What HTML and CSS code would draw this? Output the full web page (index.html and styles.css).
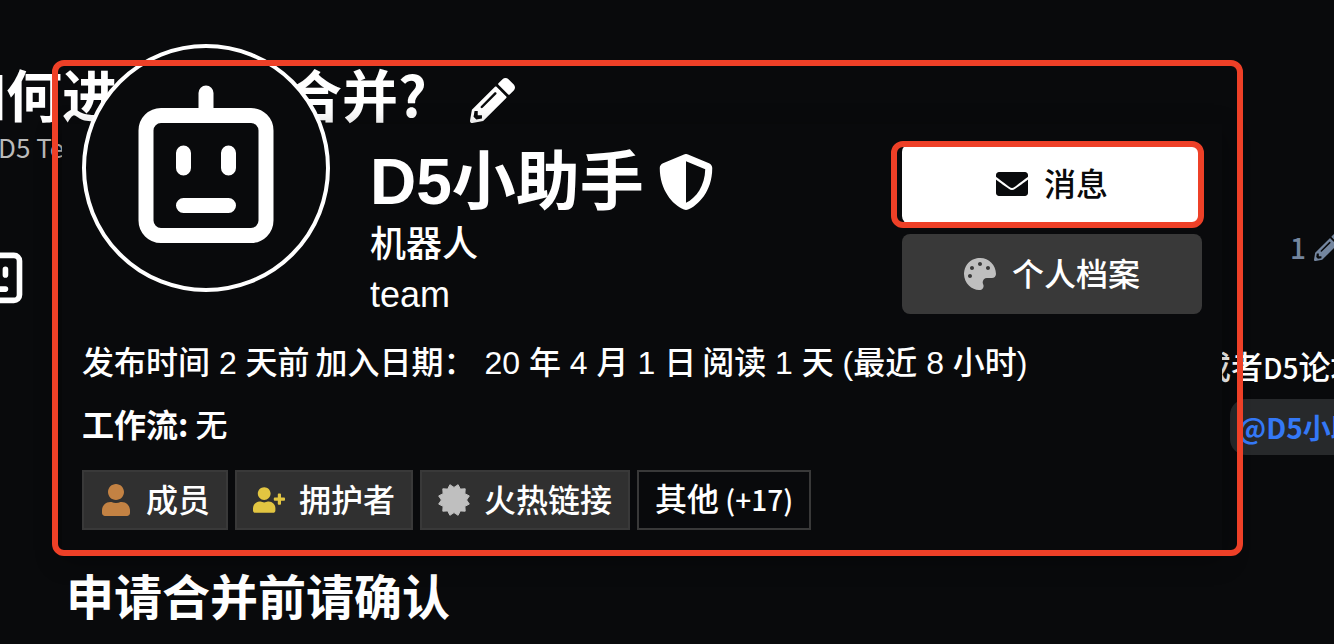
FILE: index.html
```html
<!DOCTYPE html>
<html lang="zh-CN">
<head>
<meta charset="utf-8">
<title>D5小助手</title>
<link rel="stylesheet" href="styles.css">
</head>
<body>
<svg class="sprite" aria-hidden="true">
  <symbol id="bot" viewBox="0 0 240 240">
    <g fill="none" stroke="currentColor" stroke-width="15" stroke-linecap="round">
      <rect x="60" y="67.5" width="120" height="120" rx="15"/>
      <path d="M120 45v20M97.500 105v15M142.500 105v15M97.500 157.500h45"/>
    </g>
  </symbol>
  <symbol id="pencil" viewBox="0 0 512 512"><path d="M497.9 142.1l-46.1 46.1c-4.7 4.7-12.3 4.7-17 0l-111-111c-4.7-4.7-4.7-12.3 0-17l46.1-46.1c18.700-18.700 49.100-18.700 67.900 0l60.100 60.100c18.800 18.700 18.800 49.100 0 67.900zM284.200 99.800L21.600 362.400.4 483.900c-2.900 16.400 11.400 30.600 27.800 27.800l121.500-21.300 262.600-262.600c4.700-4.700 4.700-12.300 0-17l-111-111c-4.800-4.700-12.400-4.700-17.100 0zM124.100 339.900c-5.500-5.500-5.500-14.300 0-19.800l154-154c5.500-5.500 14.300-5.500 19.800 0s5.500 14.300 0 19.800l-154 154c-5.500 5.500-14.300 5.500-19.800 0zM88 424h48v36.300l-64.500 11.300-31.100-31.100L51.700 376H88v48z"/></symbol>
</svg>

<main class="topic">
  <h1 class="topic-title">如何进行账号合并?
    <button class="edit" type="button" aria-label="编辑"><svg class="icon"><use href="#pencil"/></svg></button>
  </h1>
  <div class="category">D5 Team</div>
  <article class="post">
    <svg class="post-avatar"><use href="#bot"/></svg>
    <div class="post-body">
      <div class="post-side">
        <div class="edits">1 <svg class="icon"><use href="#pencil"/></svg></div>
        <p class="post-text">或者<span class="latin">D5</span>论坛</p>
        <a class="mention" href="#">@D5小助手</a>
      </div>
      <h2 class="post-heading">申请合并前请确认</h2>
    </div>
  </article>
</main>

<section class="card">
  <header class="card-head">
    <a class="avatar" href="#" aria-label="D5小助手"><svg><use href="#bot"/></svg></a>
    <div class="names">
      <h2 class="name">D5小助手
        <svg class="shield" viewBox="0 0 512 512"><path d="M466.500 83.700l-192-80a48.150 48.150 0 0 0-36.900 0l-192 80C27.700 91.100 16 108.600 16 128c0 198.500 114.500 335.700 221.500 380.300 11.800 4.900 25.100 4.900 36.900 0C360.100 472.600 496 349.300 496 128c0-19.400-11.700-36.900-29.500-44.300zM256.100 446.300l-.1-381 175.900 73.300c-3.300 151.400-82.100 261.100-175.800 307.700z"/></svg>
      </h2>
      <div class="subname">机器人</div>
      <div class="subname">team</div>
    </div>
    <div class="controls">
      <div class="highlight">
        <button class="btn primary" type="button">
          <svg class="icon" viewBox="0 0 512 512"><path d="M502.300 190.800c3.900-3.100 9.700-.2 9.700 4.700V400c0 26.500-21.500 48-48 48H48c-26.500 0-48-21.500-48-48V195.600c0-5 5.700-7.800 9.700-4.700 22.400 17.400 52.100 39.500 154.100 113.600 21.100 15.400 56.700 47.800 92.200 47.600 35.700.3 72-32.800 92.300-47.600 102-74.100 131.600-96.300 154-113.700zM256 320c23.200.4 56.600-29.200 73.400-41.400 132.700-96.300 142.800-104.700 173.400-128.700 5.800-4.500 9.200-11.500 9.200-18.900v-19c0-26.500-21.500-48-48-48H48c-26.500 0-48 21.500-48 48v19c0 7.400 3.400 14.300 9.200 18.900 30.600 23.900 40.700 32.400 173.400 128.700 16.800 12.200 50.200 41.800 73.400 41.400z"/></svg>
          <span class="label">消息</span>
        </button>
      </div>
      <button class="btn" type="button">
        <svg class="icon muted" viewBox="0 0 512 512"><path d="M204.300 5C104.900 24.400 24.800 104.300 5.200 203.400c-37 187 131.700 326.400 258.800 306.700 41.200-6.400 61.400-54.600 42.500-91.700-23.100-45.400 9.900-98.400 60.900-98.400h79.700c35.800 0 64.800-29.600 64.900-65.300C511.500 97.100 368.100-26.900 204.300 5zM96 320c-17.700 0-32-14.300-32-32s14.300-32 32-32 32 14.300 32 32-14.300 32-32 32zm32-128c-17.700 0-32-14.300-32-32s14.300-32 32-32 32 14.300 32 32-14.300 32-32 32zm128-64c-17.700 0-32-14.300-32-32s14.300-32 32-32 32 14.300 32 32-14.300 32-32 32zm128 64c-17.700 0-32-14.300-32-32s14.300-32 32-32 32 14.300 32 32-14.300 32-32 32z"/></svg>
        <span class="label">个人档案</span>
      </button>
    </div>
  </header>
  <div class="meta">
    <span>发布时间 2 天前</span>
    <span>加入日期： 20 年 4 月 1 日</span>
    <span>阅读 1 天 (最近 8 小时)</span>
  </div>
  <div class="field"><strong>工作流:</strong> 无</div>
  <div class="badges">
    <a class="badge" href="#"><svg class="icon bronze" viewBox="-32 0 512 512"><path d="M224 256c70.700 0 128-57.300 128-128S294.700 0 224 0 96 57.300 96 128s57.300 128 128 128zm89.600 32h-16.700c-22.200 10.200-46.900 16-72.900 16s-50.600-5.800-72.900-16h-16.700C60.200 288 0 348.200 0 422.400V464c0 26.500 21.500 48 48 48h352c26.500 0 48-21.500 48-48v-41.600c0-74.200-60.200-134.400-134.400-134.400z"/></svg><span class="label">成员</span></a>
    <a class="badge" href="#"><svg class="icon gold" viewBox="0 0 640 512"><path d="M624 208h-64v-64c0-8.800-7.200-16-16-16h-32c-8.800 0-16 7.200-16 16v64h-64c-8.800 0-16 7.200-16 16v32c0 8.800 7.200 16 16 16h64v64c0 8.800 7.200 16 16 16h32c8.800 0 16-7.200 16-16v-64h64c8.800 0 16-7.200 16-16v-32c0-8.800-7.200-16-16-16zM224 256c70.700 0 128-57.300 128-128S294.700 0 224 0 96 57.300 96 128s57.300 128 128 128zm89.600 32h-16.700c-22.200 10.200-46.900 16-72.900 16s-50.600-5.800-72.900-16h-16.700C60.200 288 0 348.200 0 422.400V464c0 26.500 21.500 48 48 48h352c26.500 0 48-21.500 48-48v-41.600c0-74.200-60.200-134.400-134.400-134.400z"/></svg><span class="label">拥护者</span></a>
    <a class="badge" href="#"><svg class="icon muted" viewBox="-16 -16 32 32"><path stroke="currentColor" stroke-linejoin="round" d="M12.600 0L15.300 4.100 10.900 6.300 11.200 11.200 6.300 10.900 4.100 15.300 0 12.600-4.100 15.300-6.300 10.900-11.200 11.200-10.900 6.300-15.300 4.100-12.600 0-15.300-4.100-10.900-6.300-11.200-11.200-6.300-10.900-4.100-15.300 0-12.600 4.100-15.300 6.300-10.900 11.200-11.200 10.900-6.300 15.300-4.100z"/></svg><span class="label">火热链接</span></a>
    <a class="badge more" href="#"><span class="label">其他<span class="latin"> (+17)</span></span></a>
  </div>
</section>
</body>
</html>
```
FILE: styles.css
```css
* { box-sizing: border-box; }

body {
  margin: 0;
  min-height: 100vh;
  position: relative;
  overflow: hidden;
  background: #090a0c;
  color: #fff;
  font-family: "Noto Sans CJK SC", sans-serif;
  font-size: 32px;
  font-weight: 500;
}

h1, h2, p { margin: 0; }
a { color: inherit; text-decoration: none; }
button { font: inherit; color: inherit; border: 0; padding: 0; background: none; }
svg { display: block; fill: currentColor; flex: none; }
.sprite { position: absolute; width: 0; height: 0; }
.icon { width: 32px; height: 32px; }
.latin { font-size: 28px; }
.label { padding-bottom: 4px; }

/* Topic page */
.topic { margin: 0 -28px 0 -50px; padding-top: 56px; }

.topic-title {
  display: flex;
  align-items: flex-start;
  gap: 43px;
  font-size: 56px;
  line-height: 74px;
}
.edit { padding-top: 22px; }
.edit .icon { width: 45px; height: 45px; }
.category { padding-left: 48px; font-size: 26px; font-weight: 400; line-height: 34px; color: #bbb; }

.post { display: flex; gap: 24px; margin-top: 66px; padding-left: 2px; }
.post-avatar { width: 90px; height: 90px; }
.post-body { flex: 1; }
.post-side { display: flex; flex-direction: column; width: 163px; margin-left: auto; }
.edits {
  display: flex;
  align-items: center;
  gap: 8px;
  padding-left: 91px;
  margin-bottom: 77px;
  font-size: 28px;
  line-height: 34px;
  color: #74869f;
}
.edits .icon { width: 28px; height: 28px; }
.post-text { line-height: 48px; white-space: nowrap; }
.mention {
  margin: 8px 0 0 31px;
  padding: 0 8px;
  border-radius: 16px;
  background: #27292b;
  color: #3478f6;
  font-size: 28px;
  font-weight: 700;
  line-height: 56px;
  white-space: nowrap;
}
.post-heading { margin-top: 103px; font-size: 48px; line-height: 72px; }

/* User card, floating over the topic */
.card {
  position: absolute;
  top: 124px;
  left: 62px;
  right: 112px;
  padding: 20px;
  background: #090a0c;
  box-shadow: 0 8px 24px rgba(0, 0, 0, 0.4);
}
.card::after {
  content: "";
  position: absolute;
  inset: -64px -21px -6px -10px;
  border: 6px solid #ee4027;
  border-radius: 12px;
  pointer-events: none;
}
.card-head { display: flex; align-items: flex-start; gap: 40px; }
.avatar {
  flex: none;
  margin-top: -100px;
  border: 4px solid #fff;
  border-radius: 50%;
  background: #090a0c;
}
.avatar svg { width: 240px; height: 240px; }
.names { flex: 1; font-family: "Liberation Sans", "Noto Sans CJK SC", sans-serif; }
.name { display: flex; align-items: center; gap: 14px; font-size: 64px; line-height: 76px; }
.shield { width: 56px; height: 56px; }
.subname { font-size: 36px; line-height: 50px; }

.controls { display: flex; flex-direction: column; gap: 10px; width: 300px; }
.highlight { position: relative; }
.highlight::after {
  content: "";
  position: absolute;
  inset: -3px -2px -4px -11px;
  border: 6px solid #ee4027;
  border-radius: 12px;
  pointer-events: none;
}
.btn {
  display: flex;
  align-items: center;
  justify-content: center;
  gap: 16px;
  width: 100%;
  height: 80px;
  border-radius: 8px;
  background: #393939;
}
.btn.primary { background: #fff; color: #090a0c; }

.meta {
  display: flex;
  gap: 6px;
  margin-top: 19px;
  font-family: "Liberation Sans", "Noto Sans CJK SC", sans-serif;
  line-height: 48px;
  white-space: nowrap;
}
.field { margin-top: 12px; line-height: 48px; }

.badges { display: flex; gap: 7px; margin-top: 23px; }
.badge {
  display: flex;
  align-items: center;
  gap: 14px;
  height: 60px;
  padding: 0 16px;
  border: 2px solid #393939;
  background: #303030;
  line-height: 48px;
  white-space: nowrap;
}
.badge.more { background: none; }
.muted { color: #bfbfbf; }
.bronze { color: #c38243; }
.gold { color: #e2c541; }
```
